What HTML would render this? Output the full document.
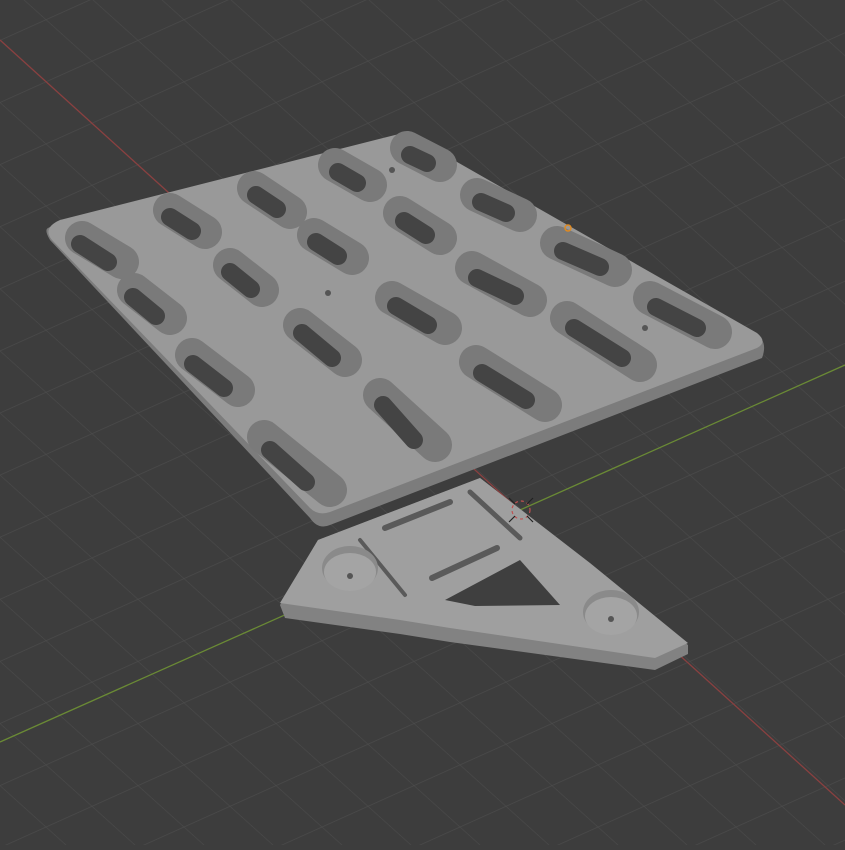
<!DOCTYPE html>
<html><head><style>html,body{margin:0;padding:0;background:#3d3d3d;overflow:hidden}</style></head>
<body>
<svg width="845" height="845" viewBox="0 0 845 845" xmlns="http://www.w3.org/2000/svg">
<defs>
<pattern id="g" width="46" height="46" patternUnits="userSpaceOnUse" patternTransform="matrix(1,0.9,-1,0.45,0,40)">
<path d="M0 0H46M0 0V46" stroke="#4b4b4b" stroke-width="1.1" fill="none"/>
</pattern>
</defs>
<rect width="845" height="845" fill="#3d3d3d"/>
<rect width="845" height="845" fill="url(#g)"/>
<line x1="0" y1="40" x2="845" y2="805" stroke="#8a4040" stroke-width="1.3"/>
<line x1="0" y1="742" x2="845" y2="365" stroke="#6a8a35" stroke-width="1.3"/>
<!-- bracket -->
<path d="M280 605 L318 540 L480 478 L590 565 L688 645 L688 654 L655 670 L450 642 L400 634 L285 618 Z" fill="#828282"/>
<path d="M280 603 L318 540 L480 478 L590 563 L688 643 L655 658 L450 628 L400 620 Z" fill="#9f9f9f"/>
<path d="M445 600 L520 560 L560 605 L475 606 Z" fill="#3f3f3f"/>
<line x1="385" y1="528" x2="450" y2="502" stroke="#5a5a5a" stroke-width="6" stroke-linecap="round"/>
<line x1="432" y1="578" x2="497" y2="548" stroke="#5a5a5a" stroke-width="6" stroke-linecap="round"/>
<line x1="470" y1="492" x2="520" y2="538" stroke="#5a5a5a" stroke-width="5" stroke-linecap="round"/>
<line x1="360" y1="540" x2="405" y2="595" stroke="#5a5a5a" stroke-width="4" stroke-linecap="round"/>
<ellipse cx="350" cy="568" rx="28" ry="22" fill="#8a8a8a"/><ellipse cx="350" cy="572" rx="26" ry="19" fill="#a4a4a4"/><circle cx="350" cy="576" r="3" fill="#555"/>
<ellipse cx="611" cy="612" rx="28" ry="22" fill="#8a8a8a"/><ellipse cx="611" cy="616" rx="26" ry="19" fill="#a4a4a4"/><circle cx="611" cy="619" r="3" fill="#555"/>
<!-- plate -->
<path d="M60 222 L395 137 Q405 134 415 140 L757 335 Q768 342 762 358 L330 525 Q318 530 310 518 L50 240 Q44 230 48 228 Z" fill="#7c7c7c"/>
<path d="M60 220 L395 135 Q405 132 415 138 L757 333 Q768 342 757 348 L330 512 Q318 516 310 508 L52 240 Q42 228 60 220 Z" fill="#999"/>
<g stroke-linecap="round" fill="none">
<g stroke="#7a7a7a" stroke-width="34">
<path d="M82 238L122 262M134 290L170 318M192 355L238 390M264 437L330 490"/>
<path d="M170 210L205 232M230 265L262 290M300 325L345 360M380 395L435 445"/>
<path d="M254 188L290 212M314 235L352 258M392 298L445 328M476 362L545 405"/>
<path d="M335 165L370 185M400 213L440 238M472 268L530 300M567 318L640 365"/>
<path d="M407 148L440 165M477 195L520 215M557 243L615 270M650 298L715 332"/>
</g>
<g stroke="#444" stroke-width="18">
<path d="M80 244L108 262M133 297L156 316M193 364L224 388M270 450L306 482"/>
<path d="M170 217L192 231M230 272L251 289M302 333L332 358M383 405L414 440"/>
<path d="M256 195L277 209M316 242L338 256M396 306L428 325M482 373L526 400"/>
<path d="M338 172L357 183M404 221L426 235M477 278L515 296M574 328L622 358"/>
<path d="M410 155L427 163M481 202L506 213M563 251L600 267M656 307L697 328"/>
</g>
</g>
<circle cx="328" cy="293" r="3" fill="#555"/>
<circle cx="645" cy="328" r="3" fill="#555"/>
<circle cx="392" cy="170" r="3" fill="#555"/>
<circle cx="568" cy="228" r="3" fill="none" stroke="#e08a20" stroke-width="1.5"/>
<g stroke="#ddd" stroke-width="1.2" fill="none"><circle cx="521" cy="510" r="9" stroke="#c05050" stroke-dasharray="3 3"/><path d="M509 498L515 504M533 498L527 504M509 522L515 516M533 522L527 516" stroke="#222"/></g>
</svg>
</body></html>
